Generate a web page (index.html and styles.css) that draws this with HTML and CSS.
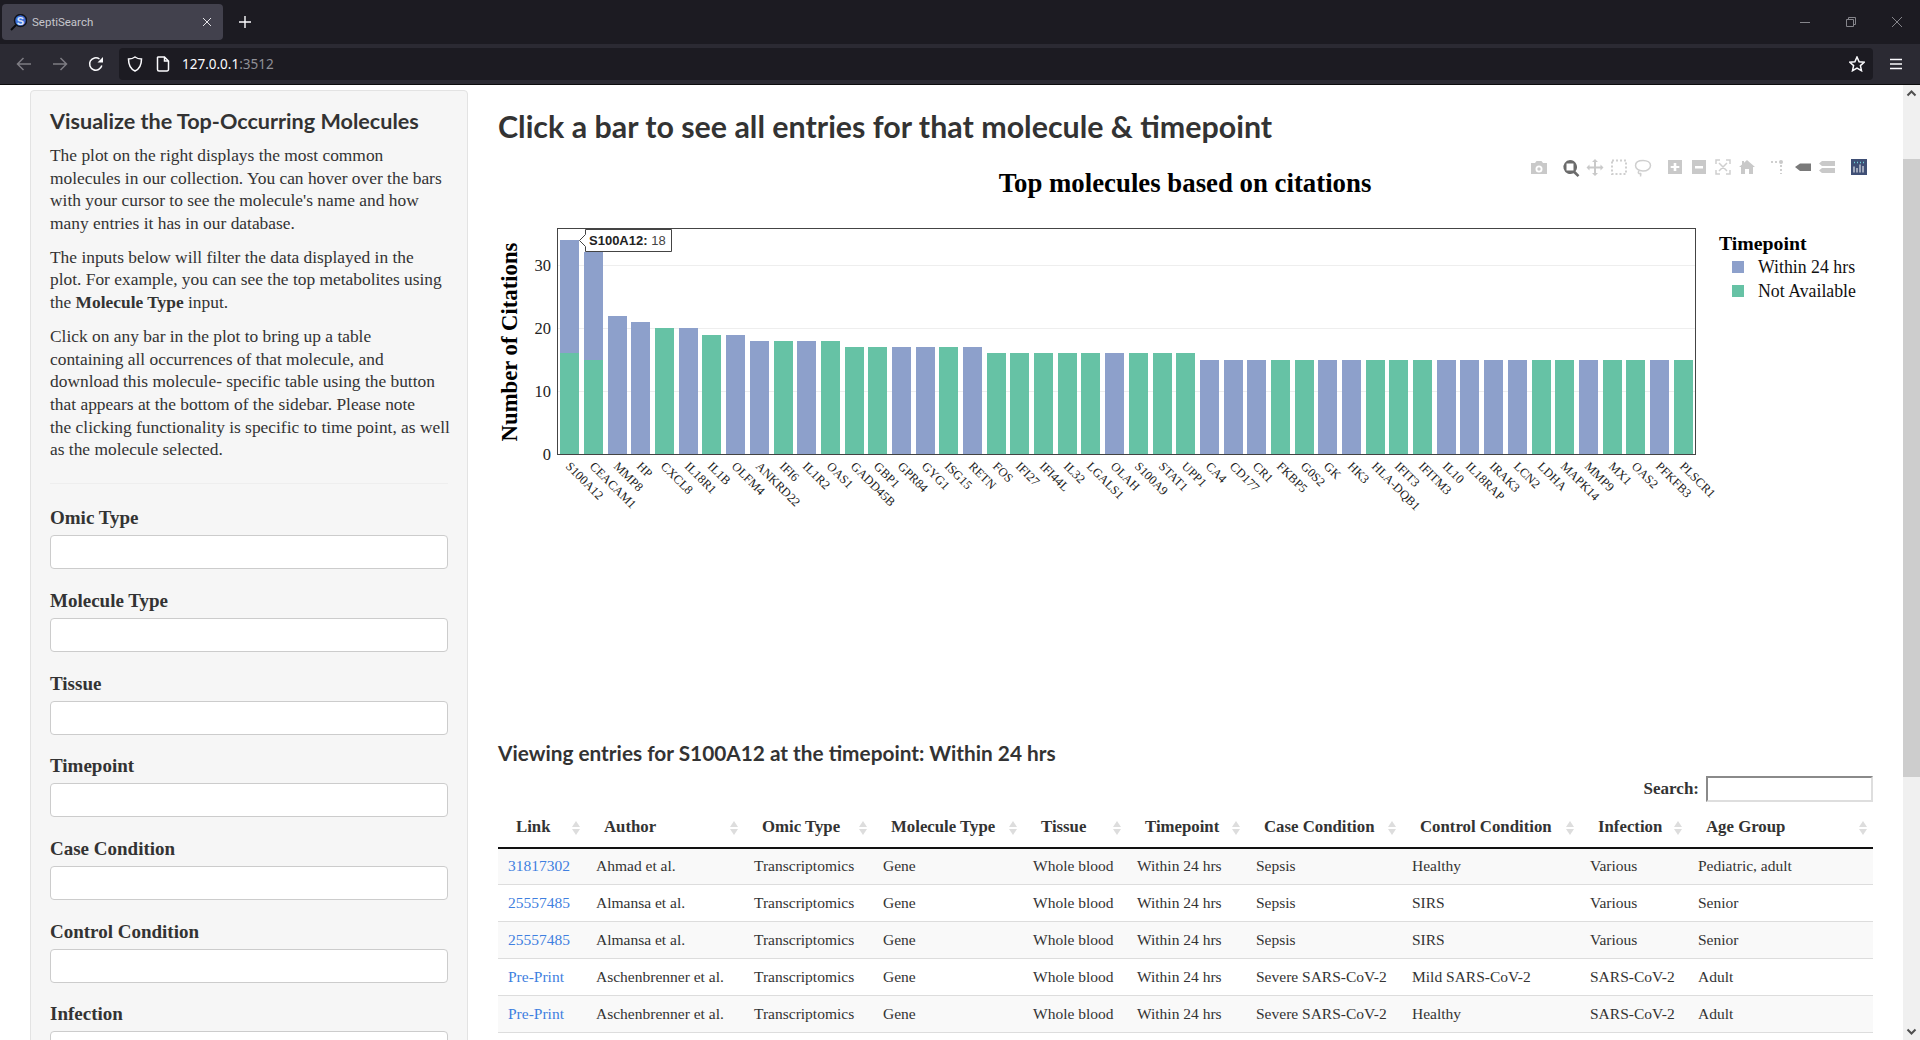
FILE: index.html
```html
<!DOCTYPE html>
<html lang="en">
<head>
<meta charset="utf-8">
<title>SeptiSearch</title>
<link rel="stylesheet" href="styles.css">
</head>
<body>
<header class="chrome">
  <div class="tabstrip">
    <div class="tab">
      <svg class="favicon" width="17" height="17" viewBox="0 0 17 17"><path class="fav-handle" d="M1 16 6.500 10.500"/><circle class="fav-lens" cx="10.500" cy="6.500" r="6"/><text class="fav-s" x="10.500" y="10.500" text-anchor="middle">S</text></svg>
      <span class="tab-title">SeptiSearch</span>
      <svg class="tab-close" width="10" height="10" viewBox="0 0 10 10"><path d="M1 1 9 9M9 1 1 9"/></svg>
    </div>
    <svg class="newtab" width="12" height="12" viewBox="0 0 12 12"><path d="M6 0V12M0 6H12"/></svg>
    <div class="winctrl">
      <svg width="10" height="10" viewBox="0 0 10 10"><path d="M0 5.500H10"/></svg>
      <svg width="10" height="10" viewBox="0 0 10 10"><path d="M.5 2.500H7.500V9.500H.5ZM2.500 2.500V.5H9.500V7.500H7.500"/></svg>
      <svg width="10" height="10" viewBox="0 0 10 10"><path d="M0 0 10 10M10 0 0 10"/></svg>
    </div>
  </div>
  <div class="toolbar">
    <svg class="nav dim" width="16" height="16" viewBox="0 0 16 16"><path d="M15 8H1.500M7.500 2 1.500 8 7.500 14"/></svg>
    <svg class="nav dim" width="16" height="16" viewBox="0 0 16 16"><path d="M1 8H14.500M8.500 2 14.500 8 8.500 14"/></svg>
    <svg class="nav" width="16" height="16" viewBox="0 0 16 16"><path d="M13.800 9.500A6.200 6.200 0 1 1 11.500 3"/><path class="solid" d="M15 1V6.500H9.500Z"/></svg>
    <div class="urlbar">
      <svg class="nav" width="16" height="16" viewBox="0 0 16 16"><path d="M8 1C6 2.500 4 3 1.500 3 1.500 9 3.500 13 8 15 12.500 13 14.500 9 14.500 3 12 3 10 2.500 8 1Z"/></svg>
      <svg class="nav" width="14" height="16" viewBox="0 0 14 16"><path d="M2 1H8.500L12.500 5V13.500A1.500 1.500 0 0 1 11 15H3A1.500 1.500 0 0 1 1.500 13.500V1.500ZM8.500 1V5H12.500"/></svg>
      <span class="url">127.0.0.1<span class="url-port">:3512</span></span>
      <svg class="nav star" width="16" height="16" viewBox="0 0 16 16"><path d="M8 1 10.100 5.700 15.200 6.200 11.400 9.600 12.500 14.700 8 12 3.500 14.700 4.600 9.600 .8 6.200 5.900 5.700Z"/></svg>
    </div>
    <svg class="nav burger" width="14" height="12" viewBox="0 0 14 12"><path d="M1 1.500H13M1 6H13M1 10.500H13"/></svg>
  </div>
</header>
<div class="viewport">
  <div class="page">
    <aside class="sidebar">
      <h4 class="side-title">Visualize the Top-Occurring Molecules</h4>
      <p>The plot on the right displays the most common<br>molecules in our collection. You can hover over the bars<br>with your cursor to see the molecule's name and how<br>many entries it has in our database.</p>
      <p>The inputs below will filter the data displayed in the<br>plot. For example, you can see the top metabolites using<br>the <strong>Molecule Type</strong> input.</p>
      <p>Click on any bar in the plot to bring up a table<br>containing all occurrences of that molecule, and<br>download this molecule- specific table using the button<br>that appears at the bottom of the sidebar. Please note<br>the clicking functionality is specific to time point, as well<br>as the molecule selected.</p>
      <hr class="side-rule">
      <div class="field"><label>Omic Type</label><div class="selectbox"></div></div>
      <div class="field"><label>Molecule Type</label><div class="selectbox"></div></div>
      <div class="field"><label>Tissue</label><div class="selectbox"></div></div>
      <div class="field"><label>Timepoint</label><div class="selectbox"></div></div>
      <div class="field"><label>Case Condition</label><div class="selectbox"></div></div>
      <div class="field"><label>Control Condition</label><div class="selectbox"></div></div>
      <div class="field"><label>Infection</label><div class="selectbox"></div></div>
    </aside>
    <main class="main">
      <h3 class="main-title">Click a bar to see all entries for that molecule &amp; timepoint</h3>
      <svg class="plot" width="1375" height="588" viewBox="498 150 1375 588">
        <text class="plot-title" x="1185" y="192" text-anchor="middle">Top molecules based on citations</text>

        <g class="tools">
          <path class="tool" d="M1531 163h4l1.500-2h5l1.500 2h4v11h-16Zm8 2.500a3.500 3.500 0 1 0 0 7 3.500 3.500 0 0 0 0-7Zm0 1.800a1.700 1.700 0 1 1 0 3.400 1.700 1.700 0 0 1 0-3.400Z" fill-rule="evenodd"/>
          <path class="tool-on" d="M1570 160a7 7 0 0 1 5.500 11.300l3.900 4-1.800 1.800-4-3.900A7 7 0 1 1 1570 160Zm-3.500 3.500v7h7v-7Z" fill-rule="evenodd"/>
          <path class="tool" d="M1595 159l3 3h-2v4.500h4.500v-2l3 3-3 3v-2h-4.500v4.500h2l-3 3-3-3h2v-4.500h-4.500v2l-3-3 3-3v2h4.500v-4.500h-2Z"/>
          <path class="tool-dash" d="M1612 160.500h14v13.500h-14Z"/>
          <path class="tool-line" d="M1643 160.500c4.500 0 7.500 2.200 7.500 5s-3 5.500-7.500 5.500c-4.500 0-7.500-2.500-7.500-5.500s3-5 7.500-5ZM1639 171c-1.500 1.500-.5 3 1 2.500s.5 2 .5 3"/>
          <path class="tool" d="M1668 160h14v14h-14Zm5.700 3v3h-3v2h3v3h2.600v-3h3v-2h-3v-3Z" fill-rule="evenodd"/>
          <path class="tool" d="M1692 160h14v14h-14Zm3 6v2.500h8V166Z" fill-rule="evenodd"/>
          <path class="tool-line" d="M1716 164v-4h4M1726 160h4v4M1730 170v4h-4M1720 174h-4v-4M1719 163l8 8M1727 163l-8 8"/>
          <path class="tool" d="M1747 160l8 7h-2v7h-4v-5h-4v5h-4v-7h-2l3-2.600V161h2v1.700Z"/>
          <path class="tool-dash" d="M1771 162h8M1781 165v9"/>
          <circle class="tool" cx="1781" cy="162" r="2"/>
          <path class="tool-dark" d="M1795 167l5-3.500h11v7.500h-11Z"/>
          <path class="tool" d="M1822 161h13v5h-13l-3-2.500ZM1822 168h13v5h-13l-3-2.500Z"/>
          <rect class="logo-bg" x="1851" y="159" width="16" height="16"/>
          <path class="logo-bars" d="M1854 166.500v6M1857 168v4.500M1860 164.500v8M1863 166v6.500"/>
          <path class="logo-dots" d="M1854 162.500h1M1857 162.500h1M1860 162.500h1M1863 162.500h1"/>
        </g>

        <g class="grid">
          <path d="M558 265.500H1695M558 328.500H1695M558 391.500H1695"/>
        </g>

        <g class="bars">
          <rect class="g" x="560" y="353" width="19" height="101"/><rect class="b" x="560" y="240" width="19" height="113"/>
          <rect class="g" x="584" y="360" width="19" height="94"/><rect class="b" x="584" y="252" width="19" height="108"/>
          <rect class="b" x="608" y="316" width="19" height="138"/>
          <rect class="b" x="631" y="322" width="19" height="132"/>
          <rect class="g" x="655" y="328" width="19" height="126"/>
          <rect class="b" x="679" y="328" width="19" height="126"/>
          <rect class="g" x="702" y="335" width="19" height="119"/>
          <rect class="b" x="726" y="335" width="19" height="119"/>
          <rect class="b" x="750" y="341" width="19" height="113"/>
          <rect class="g" x="774" y="341" width="19" height="113"/>
          <rect class="b" x="797" y="341" width="19" height="113"/>
          <rect class="g" x="821" y="341" width="19" height="113"/>
          <rect class="g" x="845" y="347" width="19" height="107"/>
          <rect class="g" x="868" y="347" width="19" height="107"/>
          <rect class="b" x="892" y="347" width="19" height="107"/>
          <rect class="b" x="916" y="347" width="19" height="107"/>
          <rect class="g" x="939" y="347" width="19" height="107"/>
          <rect class="b" x="963" y="347" width="19" height="107"/>
          <rect class="g" x="987" y="353" width="19" height="101"/>
          <rect class="g" x="1010" y="353" width="19" height="101"/>
          <rect class="g" x="1034" y="353" width="19" height="101"/>
          <rect class="g" x="1058" y="353" width="19" height="101"/>
          <rect class="g" x="1081" y="353" width="19" height="101"/>
          <rect class="b" x="1105" y="353" width="19" height="101"/>
          <rect class="g" x="1129" y="353" width="19" height="101"/>
          <rect class="g" x="1153" y="353" width="19" height="101"/>
          <rect class="g" x="1176" y="353" width="19" height="101"/>
          <rect class="b" x="1200" y="360" width="19" height="94"/>
          <rect class="b" x="1224" y="360" width="19" height="94"/>
          <rect class="b" x="1247" y="360" width="19" height="94"/>
          <rect class="g" x="1271" y="360" width="19" height="94"/>
          <rect class="g" x="1295" y="360" width="19" height="94"/>
          <rect class="b" x="1318" y="360" width="19" height="94"/>
          <rect class="b" x="1342" y="360" width="19" height="94"/>
          <rect class="g" x="1366" y="360" width="19" height="94"/>
          <rect class="g" x="1389" y="360" width="19" height="94"/>
          <rect class="g" x="1413" y="360" width="19" height="94"/>
          <rect class="b" x="1437" y="360" width="19" height="94"/>
          <rect class="b" x="1460" y="360" width="19" height="94"/>
          <rect class="b" x="1484" y="360" width="19" height="94"/>
          <rect class="b" x="1508" y="360" width="19" height="94"/>
          <rect class="g" x="1532" y="360" width="19" height="94"/>
          <rect class="g" x="1555" y="360" width="19" height="94"/>
          <rect class="b" x="1579" y="360" width="19" height="94"/>
          <rect class="g" x="1603" y="360" width="19" height="94"/>
          <rect class="g" x="1626" y="360" width="19" height="94"/>
          <rect class="b" x="1650" y="360" width="19" height="94"/>
          <rect class="g" x="1674" y="360" width="19" height="94"/>
        </g>

        <rect class="frame" x="557.500" y="228.500" width="1138" height="226"/>

        <g class="yticks" text-anchor="end">
          <text x="551" y="271">30</text>
          <text x="551" y="334">20</text>
          <text x="551" y="397">10</text>
          <text x="551" y="460">0</text>
        </g>
        <text class="ytitle" transform="rotate(-90 517 342)" x="517" y="342" text-anchor="middle">Number of Citations</text>

        <g class="xticks">
          <text transform="rotate(45 565 467)" x="565" y="467">S100A12</text>
          <text transform="rotate(45 589 467)" x="589" y="467">CEACAM1</text>
          <text transform="rotate(45 613 467)" x="613" y="467">MMP8</text>
          <text transform="rotate(45 636 467)" x="636" y="467">HP</text>
          <text transform="rotate(45 660 467)" x="660" y="467">CXCL8</text>
          <text transform="rotate(45 684 467)" x="684" y="467">IL18R1</text>
          <text transform="rotate(45 707 467)" x="707" y="467">IL1B</text>
          <text transform="rotate(45 731 467)" x="731" y="467">OLFM4</text>
          <text transform="rotate(45 755 467)" x="755" y="467">ANKRD22</text>
          <text transform="rotate(45 779 467)" x="779" y="467">IFI6</text>
          <text transform="rotate(45 802 467)" x="802" y="467">IL1R2</text>
          <text transform="rotate(45 826 467)" x="826" y="467">OAS1</text>
          <text transform="rotate(45 850 467)" x="850" y="467">GADD45B</text>
          <text transform="rotate(45 873 467)" x="873" y="467">GBP1</text>
          <text transform="rotate(45 897 467)" x="897" y="467">GPR84</text>
          <text transform="rotate(45 921 467)" x="921" y="467">GYG1</text>
          <text transform="rotate(45 944 467)" x="944" y="467">ISG15</text>
          <text transform="rotate(45 968 467)" x="968" y="467">RETN</text>
          <text transform="rotate(45 992 467)" x="992" y="467">FOS</text>
          <text transform="rotate(45 1015 467)" x="1015" y="467">IFI27</text>
          <text transform="rotate(45 1039 467)" x="1039" y="467">IFI44L</text>
          <text transform="rotate(45 1063 467)" x="1063" y="467">IL32</text>
          <text transform="rotate(45 1086 467)" x="1086" y="467">LGALS1</text>
          <text transform="rotate(45 1110 467)" x="1110" y="467">OLAH</text>
          <text transform="rotate(45 1134 467)" x="1134" y="467">S100A9</text>
          <text transform="rotate(45 1158 467)" x="1158" y="467">STAT1</text>
          <text transform="rotate(45 1181 467)" x="1181" y="467">UPP1</text>
          <text transform="rotate(45 1205 467)" x="1205" y="467">CA4</text>
          <text transform="rotate(45 1229 467)" x="1229" y="467">CD177</text>
          <text transform="rotate(45 1252 467)" x="1252" y="467">CR1</text>
          <text transform="rotate(45 1276 467)" x="1276" y="467">FKBP5</text>
          <text transform="rotate(45 1300 467)" x="1300" y="467">G0S2</text>
          <text transform="rotate(45 1323 467)" x="1323" y="467">GK</text>
          <text transform="rotate(45 1347 467)" x="1347" y="467">HK3</text>
          <text transform="rotate(45 1371 467)" x="1371" y="467">HLA-DQB1</text>
          <text transform="rotate(45 1394 467)" x="1394" y="467">IFIT3</text>
          <text transform="rotate(45 1418 467)" x="1418" y="467">IFITM3</text>
          <text transform="rotate(45 1442 467)" x="1442" y="467">IL10</text>
          <text transform="rotate(45 1465 467)" x="1465" y="467">IL18RAP</text>
          <text transform="rotate(45 1489 467)" x="1489" y="467">IRAK3</text>
          <text transform="rotate(45 1513 467)" x="1513" y="467">LCN2</text>
          <text transform="rotate(45 1537 467)" x="1537" y="467">LDHA</text>
          <text transform="rotate(45 1560 467)" x="1560" y="467">MAPK14</text>
          <text transform="rotate(45 1584 467)" x="1584" y="467">MMP9</text>
          <text transform="rotate(45 1608 467)" x="1608" y="467">MX1</text>
          <text transform="rotate(45 1631 467)" x="1631" y="467">OAS2</text>
          <text transform="rotate(45 1655 467)" x="1655" y="467">PFKFB3</text>
          <text transform="rotate(45 1679 467)" x="1679" y="467">PLSCR1</text>
        </g>

        <g class="legend">
          <text class="legend-title" x="1719" y="250">Timepoint</text>
          <rect class="b" x="1732" y="261" width="12" height="12"/>
          <text x="1758" y="273">Within 24 hrs</text>
          <rect class="g" x="1732" y="285" width="12" height="12"/>
          <text x="1758" y="297">Not Available</text>
        </g>

        <g class="hover">
          <path class="hover-box" d="M579.500 240.500 585.500 234.500V229.500H671.500V251.500H585.500V246.500Z"/>
          <text x="589" y="245"><tspan class="hover-key">S100A12:</tspan> 18</text>
        </g>
      </svg>

      <h4 class="entries-title">Viewing entries for S100A12 at the timepoint: Within 24 hrs</h4>
      <div class="dt-search"><label for="dt-q">Search:</label><input id="dt-q" class="dt-input" type="search"></div>
      <table class="dt">
        <thead>
          <tr>
            <th class="c1">Link</th><th class="c2">Author</th><th class="c3">Omic Type</th><th class="c4">Molecule Type</th><th class="c5">Tissue</th><th class="c6">Timepoint</th><th class="c7">Case Condition</th><th class="c8">Control Condition</th><th class="c9">Infection</th><th class="c10">Age Group</th>
          </tr>
        </thead>
        <tbody>
          <tr><td><a href="#">31817302</a></td><td>Ahmad et al.</td><td>Transcriptomics</td><td>Gene</td><td>Whole blood</td><td>Within 24 hrs</td><td>Sepsis</td><td>Healthy</td><td>Various</td><td>Pediatric, adult</td></tr>
          <tr><td><a href="#">25557485</a></td><td>Almansa et al.</td><td>Transcriptomics</td><td>Gene</td><td>Whole blood</td><td>Within 24 hrs</td><td>Sepsis</td><td>SIRS</td><td>Various</td><td>Senior</td></tr>
          <tr><td><a href="#">25557485</a></td><td>Almansa et al.</td><td>Transcriptomics</td><td>Gene</td><td>Whole blood</td><td>Within 24 hrs</td><td>Sepsis</td><td>SIRS</td><td>Various</td><td>Senior</td></tr>
          <tr><td><a href="#">Pre-Print</a></td><td>Aschenbrenner et al.</td><td>Transcriptomics</td><td>Gene</td><td>Whole blood</td><td>Within 24 hrs</td><td>Severe SARS-CoV-2</td><td>Mild SARS-CoV-2</td><td>SARS-CoV-2</td><td>Adult</td></tr>
          <tr><td><a href="#">Pre-Print</a></td><td>Aschenbrenner et al.</td><td>Transcriptomics</td><td>Gene</td><td>Whole blood</td><td>Within 24 hrs</td><td>Severe SARS-CoV-2</td><td>Healthy</td><td>SARS-CoV-2</td><td>Adult</td></tr>
        </tbody>
      </table>
    </main>
  </div>
  <div class="scrollbar">
    <svg class="sb-arrow" width="17" height="17" viewBox="0 0 17 17"><path d="M4.500 10.500 8.500 6.500 12.500 10.500"/></svg>
    <div class="sb-gap-top"></div>
    <div class="sb-thumb"></div>
    <div class="sb-gap-bottom"></div>
    <svg class="sb-arrow" width="17" height="17" viewBox="0 0 17 17"><path d="M4.500 6.500 8.500 10.500 12.500 6.500"/></svg>
  </div>
</div>
</body>
</html>
```

FILE: styles.css
```css
* { box-sizing: border-box; }
html, body { margin: 0; height: 100%; }
body {
  display: flex;
  flex-direction: column;
  height: 1040px;
  overflow: hidden;
  background: #fff;
  color: #333;
  font-family: "Liberation Serif", serif;
  font-size: 17.4px;
}

/* browser chrome */
.chrome { flex: none; height: 85px; background: #1c1b22; border-bottom: 1px solid #0c0c0d; }
.tabstrip { height: 44px; display: flex; align-items: center; padding: 4px 0 4px 2px; background: #1c1b22; }
.tab { width: 221px; height: 36px; background: #42414d; border-radius: 4px; display: flex; align-items: center; padding: 0 11px 0 8px; }
.favicon { flex: none; margin-right: 5px; }
.fav-lens { fill: #3f6fd8; stroke: #11131a; stroke-width: 1.500; }
.fav-handle { stroke: #0b0b0e; stroke-width: 2; fill: none; }
.fav-s { fill: #dce6fb; font: 700 11px "Liberation Sans", sans-serif; }
.tab-title { flex: 1; color: #c6c6cc; font: 11.500px Roboto, sans-serif; }
.tab-close path { stroke: #e4e4e8; stroke-width: 1; fill: none; }
.newtab { margin-left: 16px; }
.newtab path { stroke: #fbfbfe; stroke-width: 1.400; fill: none; }
.winctrl { margin-left: auto; display: flex; gap: 36px; padding-right: 18px; }
.winctrl path { stroke: #85858b; stroke-width: 1; fill: none; }
.toolbar { height: 40px; background: #2b2a33; display: flex; align-items: center; padding: 0 0 0 16px; }
.nav { flex: none; }
.nav path { stroke: #fbfbfe; stroke-width: 1.500; fill: none; }
.nav .solid { fill: #fbfbfe; stroke: none; }
.nav.dim path { stroke: #7d7c83; }
.toolbar > .nav { margin-right: 20px; }
.toolbar > .nav:nth-child(3) { margin-right: 15px; }
.urlbar { width: 1754px; height: 32px; background: #1c1b22; border-radius: 4px; display: flex; align-items: center; padding: 0 8px; }
.urlbar > .nav:nth-child(2) { margin-left: 13px; }
.url { color: #fbfbfe; font: 13.500px "Noto Sans", sans-serif; margin-left: 12px; flex: 1; }
.url-port { color: #8f8f96; }
.toolbar > .burger { margin: 0 0 0 16px; }

/* page */
.viewport { flex: 1; min-height: 0; display: flex; }
.page { flex: 1; min-width: 0; display: flex; align-items: flex-start; padding: 5px 30px 0; gap: 30px; overflow: hidden; }

.sidebar { flex: none; width: 438px; background: #f6f6f6; border: 1px solid #e3e3e3; border-radius: 4px; padding: 17px 19px 19px; line-height: 22.600px; }
.side-title { margin: 0 0 10px; font: 700 21.600px/26px Lato, sans-serif; color: #333; }
.sidebar p { margin: 0 0 11.500px; white-space: nowrap; }
.sidebar strong { font-weight: 700; }
.side-rule { margin: 22px 0 23.500px; border: 0; border-top: 1px solid #eee; }
.field { margin-bottom: 20.700px; }
.field label { display: block; font-weight: 700; font-size: 19px; line-height: 22px; margin-bottom: 6px; }
.selectbox { height: 34px; background: #fff; border: 1px solid #ccc; border-radius: 4px; }

.main { flex: 1; min-width: 0; }
.main-title { margin: 16px 0 3.500px; font: 700 30.400px/40px Lato, sans-serif; color: #333; }
.plot { display: block; }
.plot-title { font: 700 26.800px "Liberation Serif", serif; fill: #000; }
.grid path { stroke: #eee; stroke-width: 1; fill: none; }
.b { fill: #8da0cb; }
.g { fill: #66c2a5; }
.frame { fill: none; stroke: #444; stroke-width: 1; }
.yticks text { font: 16.500px "Liberation Serif", serif; fill: #222; }
.ytitle { font: 700 22.700px "Liberation Serif", serif; fill: #000; }
.xticks text { font: 12.500px "Liberation Serif", serif; fill: #222; }
.legend text { font: 17.800px "Liberation Serif", serif; fill: #111; }
.legend .legend-title { font-weight: 700; font-size: 19.800px; fill: #000; }
.hover-box { fill: #fff; stroke: #444; stroke-width: 1; }
.hover text { font: 13px "Liberation Sans", sans-serif; fill: #444; }
.hover-key { font-weight: 700; fill: #222; }
.tool { fill: #c9c9c9; stroke: none; }
.tool-on { fill: #6b6b6b; }
.tool-dark { fill: #7a7a7a; }
.tool-line { fill: none; stroke: #cfcfcf; stroke-width: 1.500; }
.tool-dash { fill: none; stroke: #cfcfcf; stroke-width: 2; stroke-dasharray: 2 2; }
.logo-bg { fill: #3f4f75; }
.logo-bars { stroke: #fff; stroke-width: 1; fill: none; }
.logo-dots { stroke: #6fd0d8; stroke-width: 1.500; fill: none; }

.entries-title { margin: 0; font: 700 20.800px/30px Lato, sans-serif; color: #333; }
.dt-search { display: flex; justify-content: flex-end; align-items: center; gap: 7px; margin-top: 8px; height: 26px; }
.dt-search label { font-weight: 700; font-size: 17px; }
.dt-input { width: 167px; height: 26px; padding: 0; border: 2px inset #dedede; background: #fff; }
.dt { width: 100%; table-layout: fixed; border-collapse: collapse; margin-top: 6px; font-size: 15.500px; }
.dt th { position: relative; height: 40px; padding: 6px 18px; text-align: left; font-weight: 700; font-size: 16.800px; border-bottom: 2px solid #111; white-space: nowrap; }
.dt th::before, .dt th::after { content: ""; position: absolute; right: 6px; width: 0; height: 0; border-left: 4px solid transparent; border-right: 4px solid transparent; }
.dt th::before { top: 13px; border-bottom: 6px solid #ddd; }
.dt th::after { top: 21px; border-top: 6px solid #ddd; }
.dt td { height: 37px; padding: 0 10px; border-bottom: 1px solid #ddd; white-space: nowrap; }
.dt tbody tr:nth-child(odd) { background: #f9f9f9; }
.dt a { color: #3f7fe0; text-decoration: none; }
.c1 { width: 88px; } .c2 { width: 158px; } .c3 { width: 129px; } .c4 { width: 150px; } .c5 { width: 104px; }
.c6 { width: 119px; } .c7 { width: 156px; } .c8 { width: 178px; } .c9 { width: 108px; } .c10 { width: 185px; }

/* scrollbar */
.scrollbar { flex: none; width: 17px; display: flex; flex-direction: column; background: #f0f0f0; }
.sb-arrow { flex: none; }
.sb-arrow path { fill: none; stroke: #505050; stroke-width: 2; }
.sb-gap-top { flex: none; height: 57px; }
.sb-thumb { flex: none; height: 618px; background: #cdcdcd; }
.sb-gap-bottom { flex: 1; }
```
